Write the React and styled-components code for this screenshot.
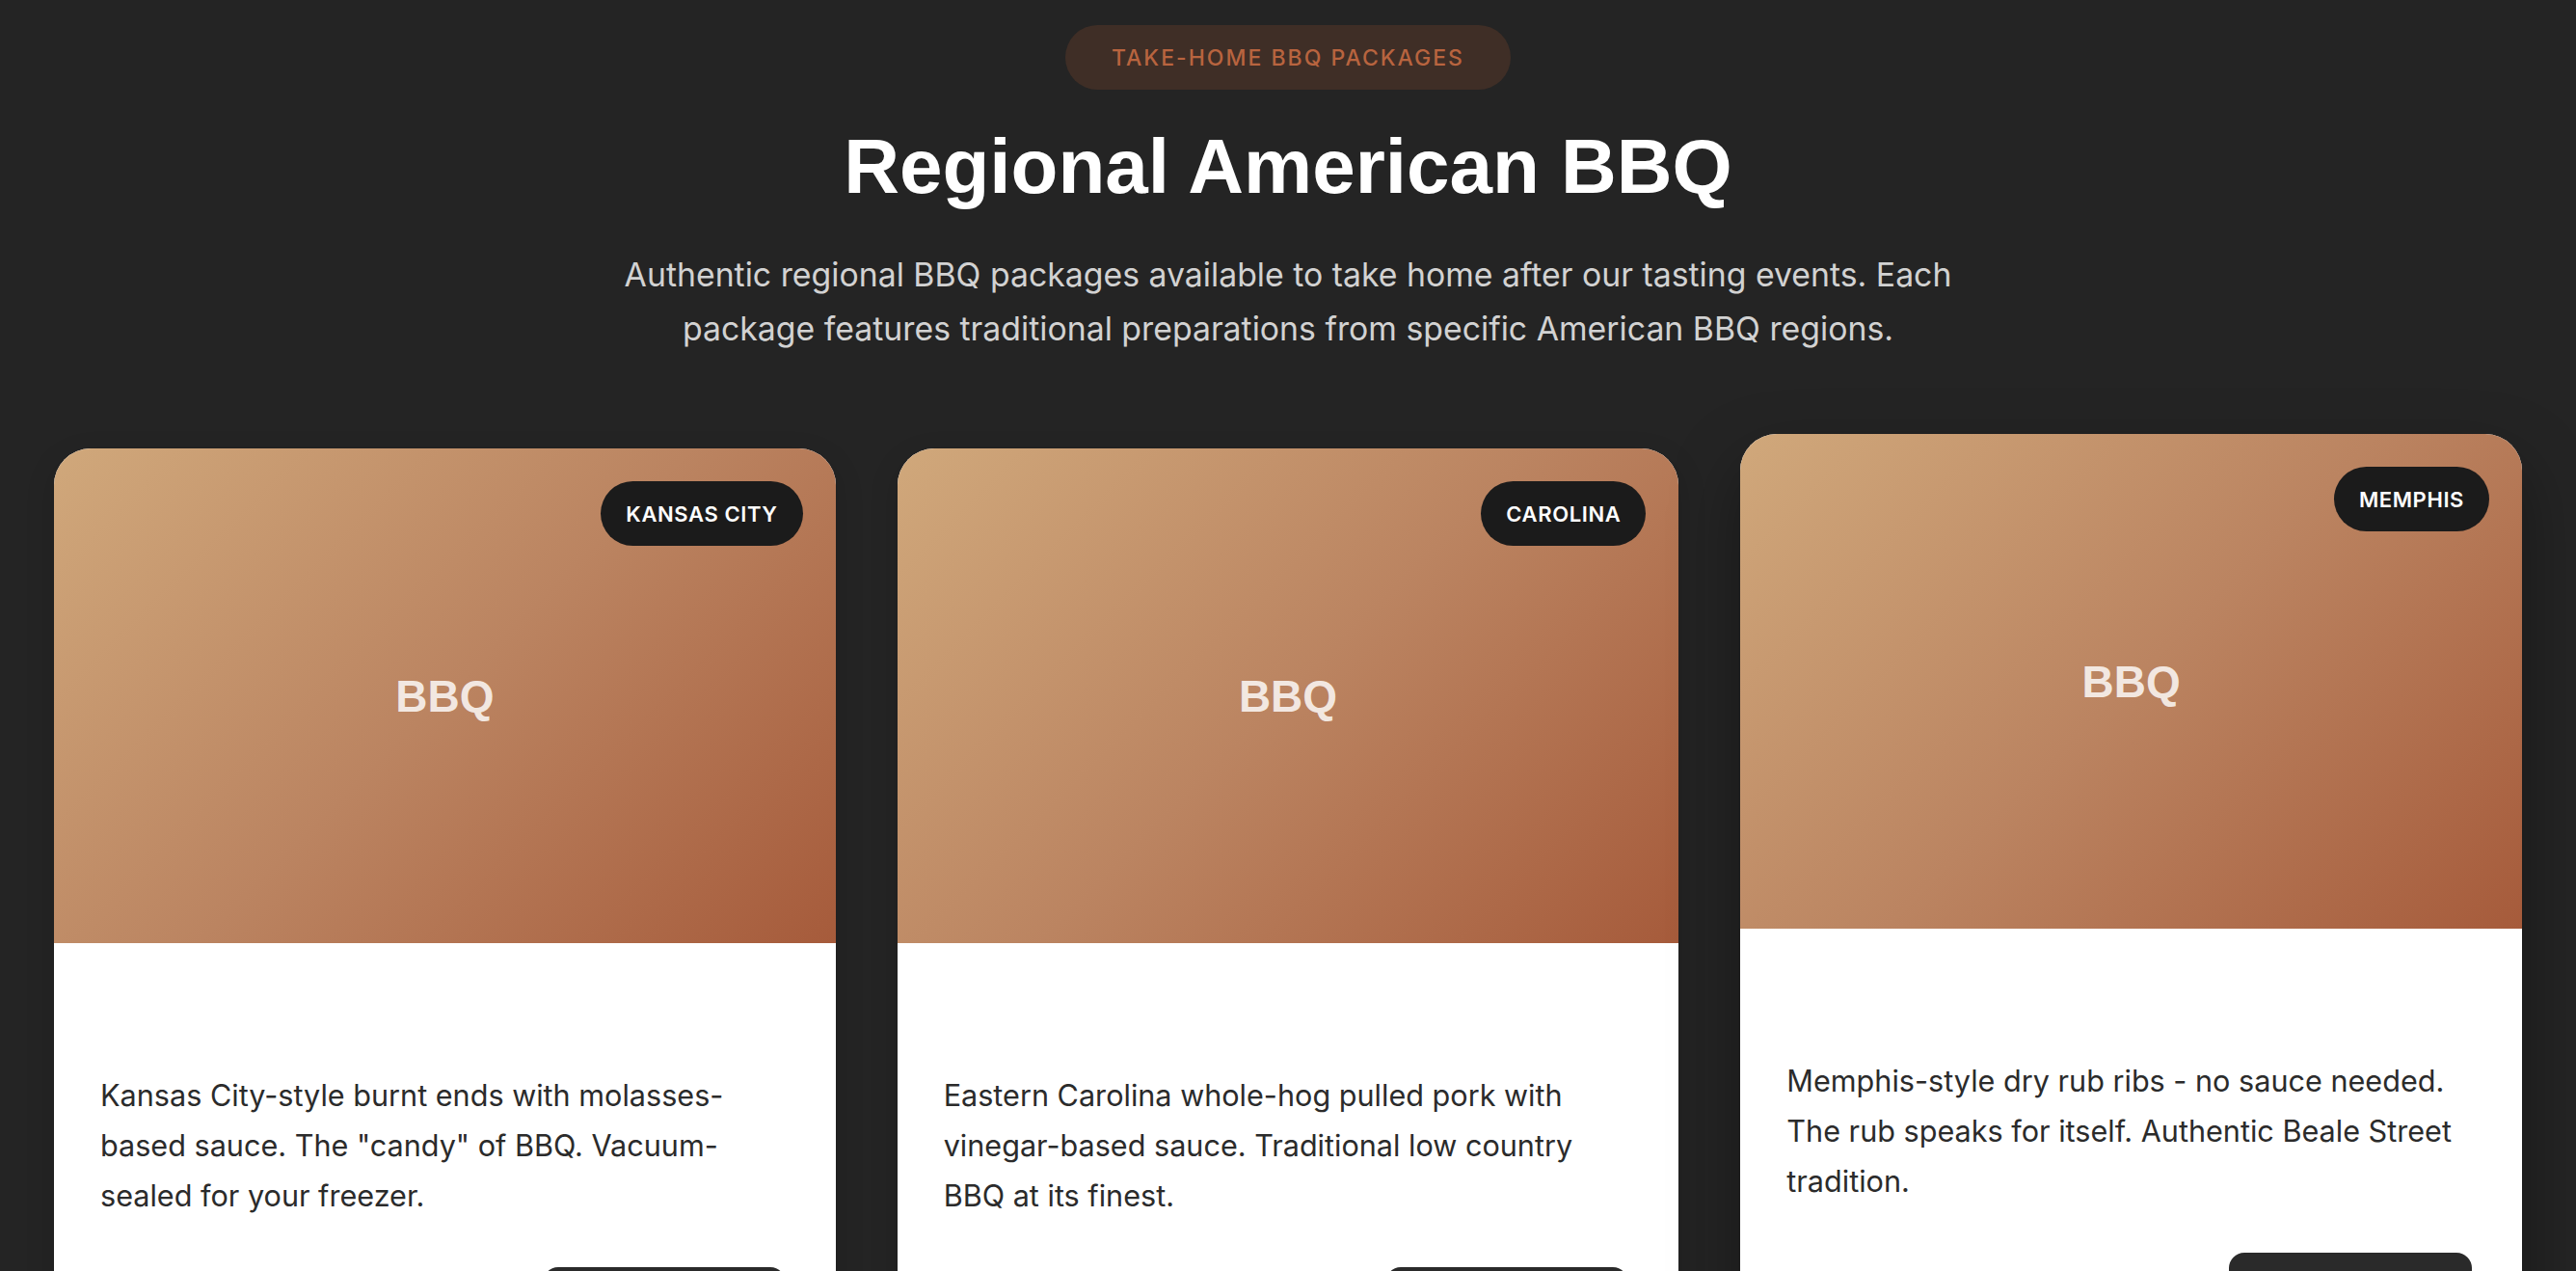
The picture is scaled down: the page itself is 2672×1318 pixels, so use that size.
import React from "react"
import styled, { createGlobalStyle } from "styled-components"

const GlobalStyle = createGlobalStyle`
    * {
        box-sizing: border-box;
    }
    body {
        margin: 0;
        background: #242424;
        font-family: Inter, "Noto Sans", sans-serif;
        overflow: hidden;
    }
`

const packages = [
    {
        region: "Kansas City",
        title: "Burnt Ends Package",
        description:
            'Kansas City-style burnt ends with molasses-based sauce. The "candy" of BBQ. Vacuum-sealed for your freezer.',
        price: "$89",
    },
    {
        region: "Carolina",
        title: "Pulled Pork Package",
        description:
            "Eastern Carolina whole-hog pulled pork with vinegar-based sauce. Traditional low country BBQ at its finest.",
        price: "$79",
    },
    {
        region: "Memphis",
        title: "Dry Rub Ribs Package",
        description:
            "Memphis-style dry rub ribs - no sauce needed. The rub speaks for itself. Authentic Beale Street tradition.",
        price: "$95",
        lifted: true,
    },
]

const App = () => {
    return (
        <>
            <GlobalStyle />
            <StyledSection>
                <StyledHeader>
                    <StyledEyebrow>Take-Home BBQ Packages</StyledEyebrow>
                    <StyledTitle>Regional American BBQ</StyledTitle>
                    <StyledLead>
                        Authentic regional BBQ packages available to take home
                        after our tasting events. Each package features
                        traditional preparations from specific American BBQ
                        regions.
                    </StyledLead>
                </StyledHeader>
                <StyledGrid>
                    {packages.map((item) => (
                        <StyledCard key={item.region} $lifted={item.lifted}>
                            <StyledImage>
                                <StyledImageLabel>BBQ</StyledImageLabel>
                                <StyledBadge>{item.region}</StyledBadge>
                            </StyledImage>
                            <StyledBody>
                                <StyledCardTitle>{item.title}</StyledCardTitle>
                                <StyledDescription>
                                    {item.description}
                                </StyledDescription>
                                <StyledFooter>
                                    <StyledPrice>{item.price}</StyledPrice>
                                    <StyledButton>Reserve</StyledButton>
                                </StyledFooter>
                            </StyledBody>
                        </StyledCard>
                    ))}
                </StyledGrid>
            </StyledSection>
        </>
    )
}

const StyledSection = styled.section`
    min-height: 1318px;
    padding: 26px 56px 80px;
`

const StyledHeader = styled.header`
    display: flex;
    flex-direction: column;
    align-items: center;
    text-align: center;
`

const StyledEyebrow = styled.span`
    display: inline-flex;
    align-items: center;
    height: 67px;
    padding: 0 48px;
    border-radius: 999px;
    background: #3f2e26;
    color: #b8643f;
    font-size: 23px;
    font-weight: 500;
    letter-spacing: 2px;
    text-transform: uppercase;
`

const StyledTitle = styled.h1`
    margin: 32px 0 0;
    color: #ffffff;
    font-family: "Liberation Sans", Arial, sans-serif;
    font-size: 80px;
    font-weight: 700;
    line-height: 96px;
`

const StyledLead = styled.p`
    max-width: 1500px;
    margin: 36px 0 0;
    color: #d2d2d2;
    font-size: 33.8px;
    line-height: 56px;
`

const StyledGrid = styled.div`
    display: grid;
    grid-template-columns: repeat(3, 1fr);
    gap: 64px;
    margin-top: 96px;
    align-items: start;
`

const StyledCard = styled.article`
    overflow: hidden;
    border-radius: 38px;
    background: #ffffff;
    transform: translateY(${(props) => (props.$lifted ? "-15px" : "0")});
    box-shadow: ${(props) =>
        props.$lifted
            ? "0 30px 70px rgba(0, 0, 0, 0.35)"
            : "0 10px 30px rgba(0, 0, 0, 0.15)"};
`

const StyledImage = styled.div`
    position: relative;
    display: flex;
    align-items: center;
    justify-content: center;
    height: 513px;
    background: linear-gradient(135deg, #d0a87b 0%, #bb8461 50%, #a65b3b 100%);
`

const StyledImageLabel = styled.span`
    color: rgba(255, 255, 255, 0.82);
    font-family: "Liberation Sans", Arial, sans-serif;
    font-size: 46px;
    font-weight: 700;
`

const StyledBadge = styled.span`
    position: absolute;
    top: 34px;
    right: 34px;
    display: inline-flex;
    align-items: center;
    height: 67px;
    padding: 0 26px;
    border-radius: 999px;
    background: #1b1b1b;
    color: #ffffff;
    font-size: 22px;
    font-weight: 600;
    letter-spacing: 0.6px;
    text-transform: uppercase;
`

const StyledBody = styled.div`
    padding: 54px 52px 48px 48px;
`

const StyledCardTitle = styled.h3`
    margin: 0 0 28px;
    color: #ffffff;
    font-size: 38px;
    font-weight: 600;
    line-height: 50px;
`

const StyledDescription = styled.p`
    margin: 0;
    color: #2b2b2b;
    font-size: 30.6px;
    line-height: 52px;
`

const StyledFooter = styled.div`
    display: flex;
    align-items: center;
    justify-content: space-between;
    margin-top: 48px;
`

const StyledPrice = styled.span`
    color: #ffffff;
    font-size: 40px;
    font-weight: 700;
`

const StyledButton = styled.button`
    width: 252px;
    height: 72px;
    border: none;
    border-radius: 16px;
    background: #2a2a2a;
    color: #ffffff;
    font-family: Inter, sans-serif;
    font-size: 24px;
    font-weight: 600;
`

export default App
